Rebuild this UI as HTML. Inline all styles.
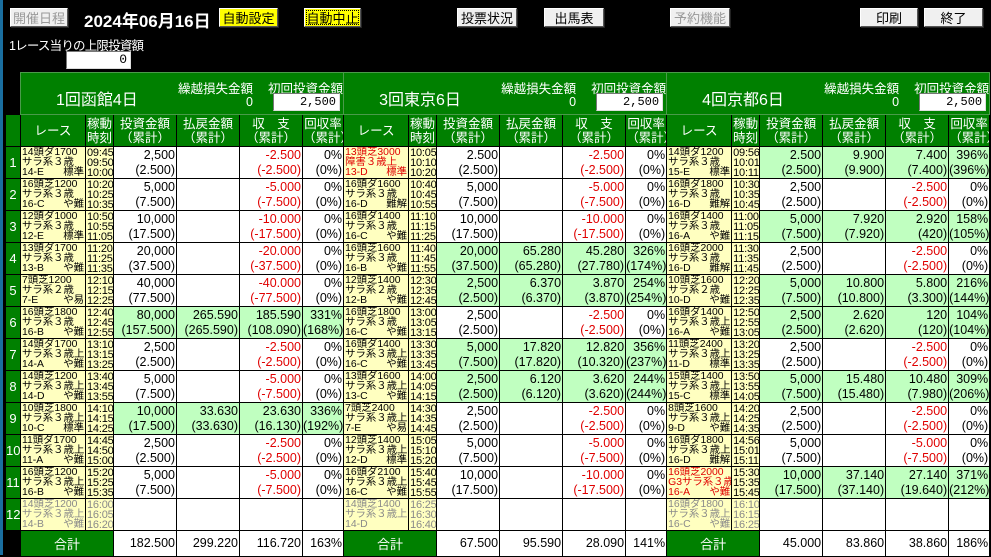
<!DOCTYPE html>
<html><head><meta charset="utf-8">
<style>
body{margin:0;background:#000;width:991px;height:555px;overflow:hidden;position:relative;font-family:"Liberation Sans","Noto Sans CJK JP",sans-serif;}
.btn{position:absolute;top:8px;height:19px;background:#f0f0f0;border:1px solid;border-color:#fff #555 #555 #fff;box-shadow:1px 1px 0 #222;font-size:13px;line-height:19px;text-align:center;color:#000;box-sizing:border-box;}
.dis{color:#999;}
.yel{background:#ffff00;}
#date{position:absolute;left:84px;top:7px;color:#fff;font-size:17px;font-weight:bold;}
#lim{position:absolute;left:9px;top:35px;color:#fff;font-size:12.5px;letter-spacing:-0.8px;}
.inp{position:absolute;background:#fff;border:1px solid;border-color:#777 #ddd #ddd #777;box-sizing:border-box;text-align:right;font-family:"Liberation Mono",monospace;font-size:13px;padding-right:3px;color:#000;}
table{position:absolute;left:5px;top:72px;width:984px;border-collapse:collapse;table-layout:fixed;}
td{border:1px solid #000;padding:0;overflow:hidden;white-space:nowrap;}
.hd{background:#008000;color:#fff;height:41px;position:relative;border-color:#4a9a4a;}
.ch td{background:#008000;color:#fff;font-size:12.5px;line-height:14px;text-align:center;height:31px;}
.rn{background:#008000;color:#fff;text-align:center;font-size:13px;}
.bk{background:#000;border:none;}
.r{position:relative;background:#ffffc0;font-size:10.4px;line-height:10px;letter-spacing:0;padding-left:1px;vertical-align:top;padding-top:1px;}
.r i{position:absolute;right:1px;font-style:normal;}
.t{background:#ffffc0;font-size:11px;line-height:10px;letter-spacing:-0.2px;vertical-align:top;padding-top:1px;padding-left:1px;}
.n{background:#fff;font-size:12.5px;line-height:15px;text-align:right;padding-right:1px;letter-spacing:0;}
.m{color:#e00000;}
.gr{color:#8a8a8a;}
.rd{color:#e00000;}
tr.d{height:32px;}
.tot td{height:25px;}
.sum{background:#008000;color:#fff;text-align:center;font-size:13px;}
.vn{position:absolute;left:35px;top:13px;font-size:16px;}
.l1{position:absolute;left:157px;top:5px;font-size:12.5px;}
.l2{position:absolute;left:247px;top:5px;font-size:12.5px;}
.z{position:absolute;left:225px;top:22px;font-size:12.5px;}
.hd .inp{left:252px;top:20px;width:67px;height:18px;font-size:12px;line-height:16px;}
</style></head><body>
<div style="position:absolute;left:0;top:0;width:3px;height:555px;background:#1a6fa0"></div>
<div class="btn dis" style="left:10px;width:58px;">開催日程</div>
<div id="date">2024年06月16日</div>
<div class="btn yel" style="left:219px;width:59px;">自動設定</div>
<div class="btn yel" style="left:304px;width:57px;outline:1px dotted #000;outline-offset:-3px;">自動中止</div>
<div class="btn" style="left:457px;width:60px;">投票状況</div>
<div class="btn" style="left:544px;width:60px;">出馬表</div>
<div class="btn dis" style="left:670px;width:60px;">予約機能</div>
<div class="btn" style="left:860px;width:58px;">印刷</div>
<div class="btn" style="left:924px;width:59px;">終了</div>
<div id="lim">1レース当りの上限投資額</div>
<div class="inp" style="left:66px;top:51px;width:65px;height:18px;line-height:16px;">0</div>

<table>
<colgroup><col style="width:15px">
<col style="width:65px"><col style="width:28px"><col style="width:63px"><col style="width:63px"><col style="width:63px"><col style="width:41px">
<col style="width:65px"><col style="width:28px"><col style="width:63px"><col style="width:63px"><col style="width:63px"><col style="width:41px">
<col style="width:65px"><col style="width:28px"><col style="width:63px"><col style="width:63px"><col style="width:63px"><col style="width:41px">
</colgroup>
<tr><td class="bk"></td>
<td colspan="6" class="hd"><span class="vn">1回函館4日</span><span class="l1">繰越損失金額</span><span class="l2">初回投資金額</span><span class="z">0</span><div class="inp">2,500</div></td>
<td colspan="6" class="hd"><span class="vn">3回東京6日</span><span class="l1">繰越損失金額</span><span class="l2">初回投資金額</span><span class="z">0</span><div class="inp">2,500</div></td>
<td colspan="6" class="hd"><span class="vn">4回京都6日</span><span class="l1">繰越損失金額</span><span class="l2">初回投資金額</span><span class="z">0</span><div class="inp">2,500</div></td></tr>
<tr class="ch"><td class="bk"></td>
<td>レース</td><td>稼動<br>時刻</td><td>投資金額<br>（累計）</td><td>払戻金額<br>（累計）</td><td>収　支<br>（累計）</td><td>回収率<br>（累計）</td>
<td>レース</td><td>稼動<br>時刻</td><td>投資金額<br>（累計）</td><td>払戻金額<br>（累計）</td><td>収　支<br>（累計）</td><td>回収率<br>（累計）</td>
<td>レース</td><td>稼動<br>時刻</td><td>投資金額<br>（累計）</td><td>払戻金額<br>（累計）</td><td>収　支<br>（累計）</td><td>回収率<br>（累計）</td></tr>

<tr class="d"><td class="rn">1</td>
<td class="r">14頭ダ1700<br>サラ系３歳<br><i>標準</i>14-E</td><td class="t">09:45<br>09:50<br>10:00</td><td class="n">2,500<br>(2.500)</td><td class="n"></td><td class="n m">-2.500<br>(-2.500)</td><td class="n">0%<br>(0%)</td>
<td class="r rd">13頭芝3000<br>障害３歳上<br><i>標準</i>13-D</td><td class="t">10:05<br>10:10<br>10:20</td><td class="n">2.500<br>(2.500)</td><td class="n"></td><td class="n m">-2.500<br>(-2.500)</td><td class="n">0%<br>(0%)</td>
<td class="r">14頭ダ1200<br>サラ系３歳<br><i>標準</i>15-E</td><td class="t">09:56<br>10:01<br>10:11</td><td class="n" style="background:#c0ffc0">2.500<br>(2.500)</td><td class="n" style="background:#c0ffc0">9.900<br>(9.900)</td><td class="n" style="background:#c0ffc0">7.400<br>(7.400)</td><td class="n" style="background:#c0ffc0">396%<br>(396%)</td></tr>

<tr class="d"><td class="rn">2</td>
<td class="r">16頭芝1200<br>サラ系３歳<br><i>や難</i>16-C</td><td class="t">10:20<br>10:25<br>10:35</td><td class="n">5,000<br>(7.500)</td><td class="n"></td><td class="n m">-5.000<br>(-7.500)</td><td class="n">0%<br>(0%)</td>
<td class="r">16頭ダ1600<br>サラ系３歳<br><i>難解</i>16-D</td><td class="t">10:40<br>10:45<br>10:55</td><td class="n">5,000<br>(7.500)</td><td class="n"></td><td class="n m">-5.000<br>(-7.500)</td><td class="n">0%<br>(0%)</td>
<td class="r">16頭ダ1800<br>サラ系３歳<br><i>難解</i>16-D</td><td class="t">10:30<br>10:35<br>10:45</td><td class="n">2,500<br>(2.500)</td><td class="n"></td><td class="n m">-2.500<br>(-2.500)</td><td class="n">0%<br>(0%)</td></tr>

<tr class="d"><td class="rn">3</td>
<td class="r">12頭ダ1000<br>サラ系３歳<br><i>標準</i>12-E</td><td class="t">10:50<br>10:55<br>11:05</td><td class="n">10,000<br>(17.500)</td><td class="n"></td><td class="n m">-10.000<br>(-17.500)</td><td class="n">0%<br>(0%)</td>
<td class="r">16頭ダ1400<br>サラ系３歳<br><i>や難</i>16-C</td><td class="t">11:10<br>11:15<br>11:25</td><td class="n">10,000<br>(17.500)</td><td class="n"></td><td class="n m">-10.000<br>(-17.500)</td><td class="n">0%<br>(0%)</td>
<td class="r">16頭ダ1400<br>サラ系３歳<br><i>や難</i>16-A</td><td class="t">11:00<br>11:05<br>11:15</td><td class="n" style="background:#c0ffc0">5,000<br>(7.500)</td><td class="n" style="background:#c0ffc0">7.920<br>(7.920)</td><td class="n" style="background:#c0ffc0">2.920<br>(420)</td><td class="n" style="background:#c0ffc0">158%<br>(105%)</td></tr>

<tr class="d"><td class="rn">4</td>
<td class="r">13頭ダ1700<br>サラ系３歳<br><i>や難</i>13-B</td><td class="t">11:20<br>11:25<br>11:35</td><td class="n">20,000<br>(37.500)</td><td class="n"></td><td class="n m">-20.000<br>(-37.500)</td><td class="n">0%<br>(0%)</td>
<td class="r">16頭芝1600<br>サラ系３歳<br><i>や難</i>16-B</td><td class="t">11:40<br>11:45<br>11:55</td><td class="n" style="background:#c0ffc0">20,000<br>(37.500)</td><td class="n" style="background:#c0ffc0">65.280<br>(65.280)</td><td class="n" style="background:#c0ffc0">45.280<br>(27.780)</td><td class="n" style="background:#c0ffc0">326%<br>(174%)</td>
<td class="r">16頭芝2000<br>サラ系３歳<br><i>難解</i>16-D</td><td class="t">11:30<br>11:35<br>11:45</td><td class="n">2,500<br>(2.500)</td><td class="n"></td><td class="n m">-2.500<br>(-2.500)</td><td class="n">0%<br>(0%)</td></tr>

<tr class="d"><td class="rn">5</td>
<td class="r">7頭芝1200<br>サラ系２歳<br><i>や易</i>7-E</td><td class="t">12:10<br>12:15<br>12:25</td><td class="n">40,000<br>(77.500)</td><td class="n"></td><td class="n m">-40.000<br>(-77.500)</td><td class="n">0%<br>(0%)</td>
<td class="r">12頭芝1400<br>サラ系２歳<br><i>や難</i>12-B</td><td class="t">12:30<br>12:35<br>12:45</td><td class="n" style="background:#c0ffc0">2,500<br>(2.500)</td><td class="n" style="background:#c0ffc0">6.370<br>(6.370)</td><td class="n" style="background:#c0ffc0">3.870<br>(3.870)</td><td class="n" style="background:#c0ffc0">254%<br>(254%)</td>
<td class="r">10頭芝1600<br>サラ系２歳<br><i>や難</i>10-D</td><td class="t">12:20<br>12:25<br>12:35</td><td class="n" style="background:#c0ffc0">5,000<br>(7.500)</td><td class="n" style="background:#c0ffc0">10.800<br>(10.800)</td><td class="n" style="background:#c0ffc0">5.800<br>(3.300)</td><td class="n" style="background:#c0ffc0">216%<br>(144%)</td></tr>

<tr class="d"><td class="rn">6</td>
<td class="r">16頭芝1800<br>サラ系３歳<br><i>や難</i>16-B</td><td class="t">12:40<br>12:45<br>12:55</td><td class="n" style="background:#c0ffc0">80,000<br>(157.500)</td><td class="n" style="background:#c0ffc0">265.590<br>(265.590)</td><td class="n" style="background:#c0ffc0">185.590<br>(108.090)</td><td class="n" style="background:#c0ffc0">331%<br>(168%)</td>
<td class="r">16頭芝1800<br>サラ系３歳<br><i>や難</i>16-C</td><td class="t">13:00<br>13:05<br>13:15</td><td class="n">2,500<br>(2.500)</td><td class="n"></td><td class="n m">-2.500<br>(-2.500)</td><td class="n">0%<br>(0%)</td>
<td class="r">16頭ダ1400<br>サラ系３歳上<br><i>や難</i>16-A</td><td class="t">12:50<br>12:55<br>13:05</td><td class="n" style="background:#c0ffc0">2,500<br>(2.500)</td><td class="n" style="background:#c0ffc0">2.620<br>(2.620)</td><td class="n" style="background:#c0ffc0">120<br>(120)</td><td class="n" style="background:#c0ffc0">104%<br>(104%)</td></tr>

<tr class="d"><td class="rn">7</td>
<td class="r">14頭ダ1700<br>サラ系３歳上<br><i>や難</i>14-A</td><td class="t">13:10<br>13:15<br>13:25</td><td class="n">2,500<br>(2.500)</td><td class="n"></td><td class="n m">-2.500<br>(-2.500)</td><td class="n">0%<br>(0%)</td>
<td class="r">16頭ダ1400<br>サラ系３歳上<br><i>や難</i>16-C</td><td class="t">13:30<br>13:35<br>13:45</td><td class="n" style="background:#c0ffc0">5,000<br>(7.500)</td><td class="n" style="background:#c0ffc0">17.820<br>(17.820)</td><td class="n" style="background:#c0ffc0">12.820<br>(10.320)</td><td class="n" style="background:#c0ffc0">356%<br>(237%)</td>
<td class="r">11頭芝2400<br>サラ系３歳上<br><i>標準</i>11-D</td><td class="t">13:20<br>13:25<br>13:35</td><td class="n">2,500<br>(2.500)</td><td class="n"></td><td class="n m">-2.500<br>(-2.500)</td><td class="n">0%<br>(0%)</td></tr>

<tr class="d"><td class="rn">8</td>
<td class="r">14頭芝1200<br>サラ系３歳上<br><i>や難</i>14-D</td><td class="t">13:40<br>13:45<br>13:55</td><td class="n">5,000<br>(7.500)</td><td class="n"></td><td class="n m">-5.000<br>(-7.500)</td><td class="n">0%<br>(0%)</td>
<td class="r">13頭ダ1600<br>サラ系３歳上<br><i>や難</i>13-C</td><td class="t">14:00<br>14:05<br>14:15</td><td class="n" style="background:#c0ffc0">2,500<br>(2.500)</td><td class="n" style="background:#c0ffc0">6.120<br>(6.120)</td><td class="n" style="background:#c0ffc0">3.620<br>(3.620)</td><td class="n" style="background:#c0ffc0">244%<br>(244%)</td>
<td class="r">15頭芝1400<br>サラ系３歳上<br><i>標準</i>15-C</td><td class="t">13:50<br>13:55<br>14:05</td><td class="n" style="background:#c0ffc0">5,000<br>(7.500)</td><td class="n" style="background:#c0ffc0">15.480<br>(15.480)</td><td class="n" style="background:#c0ffc0">10.480<br>(7.980)</td><td class="n" style="background:#c0ffc0">309%<br>(206%)</td></tr>

<tr class="d"><td class="rn">9</td>
<td class="r">10頭芝1800<br>サラ系３歳上<br><i>標準</i>10-C</td><td class="t">14:10<br>14:15<br>14:25</td><td class="n" style="background:#c0ffc0">10,000<br>(17.500)</td><td class="n" style="background:#c0ffc0">33.630<br>(33.630)</td><td class="n" style="background:#c0ffc0">23.630<br>(16.130)</td><td class="n" style="background:#c0ffc0">336%<br>(192%)</td>
<td class="r">7頭芝2400<br>サラ系３歳上<br><i>や易</i>7-E</td><td class="t">14:30<br>14:35<br>14:45</td><td class="n">2,500<br>(2.500)</td><td class="n"></td><td class="n m">-2.500<br>(-2.500)</td><td class="n">0%<br>(0%)</td>
<td class="r">8頭芝1600<br>サラ系３歳上<br><i>や難</i>9-D</td><td class="t">14:20<br>14:25<br>14:35</td><td class="n">2,500<br>(2.500)</td><td class="n"></td><td class="n m">-2.500<br>(-2.500)</td><td class="n">0%<br>(0%)</td></tr>

<tr class="d"><td class="rn">10</td>
<td class="r">11頭ダ1700<br>サラ系３歳上<br><i>や難</i>11-A</td><td class="t">14:45<br>14:50<br>15:00</td><td class="n">2,500<br>(2.500)</td><td class="n"></td><td class="n m">-2.500<br>(-2.500)</td><td class="n">0%<br>(0%)</td>
<td class="r">12頭芝1400<br>サラ系３歳上<br><i>標準</i>12-D</td><td class="t">15:05<br>15:10<br>15:20</td><td class="n">5,000<br>(7.500)</td><td class="n"></td><td class="n m">-5.000<br>(-7.500)</td><td class="n">0%<br>(0%)</td>
<td class="r">16頭ダ1800<br>サラ系３歳上<br><i>難解</i>16-D</td><td class="t">14:56<br>15:01<br>15:11</td><td class="n">5,000<br>(7.500)</td><td class="n"></td><td class="n m">-5.000<br>(-7.500)</td><td class="n">0%<br>(0%)</td></tr>

<tr class="d"><td class="rn">11</td>
<td class="r">16頭芝1200<br>サラ系３歳上<br><i>や難</i>16-B</td><td class="t">15:20<br>15:25<br>15:35</td><td class="n">5,000<br>(7.500)</td><td class="n"></td><td class="n m">-5.000<br>(-7.500)</td><td class="n">0%<br>(0%)</td>
<td class="r">16頭ダ2100<br>サラ系３歳上<br><i>や難</i>16-C</td><td class="t">15:40<br>15:45<br>15:55</td><td class="n">10,000<br>(17.500)</td><td class="n"></td><td class="n m">-10.000<br>(-17.500)</td><td class="n">0%<br>(0%)</td>
<td class="r rd">16頭芝2000<br>G3サラ系３歳<br><i>や難</i>16-A</td><td class="t">15:30<br>15:35<br>15:45</td><td class="n" style="background:#c0ffc0">10,000<br>(17.500)</td><td class="n" style="background:#c0ffc0">37.140<br>(37.140)</td><td class="n" style="background:#c0ffc0">27.140<br>(19.640)</td><td class="n" style="background:#c0ffc0">371%<br>(212%)</td></tr>

<tr class="d"><td class="rn">12</td>
<td class="r gr">14頭芝1200<br>サラ系３歳上<br><i>や難</i>14-B</td><td class="t gr">16:00<br>16:05<br>16:20</td><td class="n"></td><td class="n"></td><td class="n"></td><td class="n"></td>
<td class="r gr">14頭芝1400<br>サラ系３歳上<br>14-D</td><td class="t gr">16:25<br>16:30<br>16:40</td><td class="n"></td><td class="n"></td><td class="n"></td><td class="n"></td>
<td class="r gr">16頭ダ1800<br>サラ系３歳上<br><i>や難</i>16-C</td><td class="t gr">16:10<br>16:15<br>16:25</td><td class="n"></td><td class="n"></td><td class="n"></td><td class="n"></td></tr>

<tr class="tot"><td class="bk"></td>
<td colspan="2" class="sum">合計</td><td class="n">182.500</td><td class="n">299.220</td><td class="n">116.720</td><td class="n">163%</td>
<td colspan="2" class="sum">合計</td><td class="n">67.500</td><td class="n">95.590</td><td class="n">28.090</td><td class="n">141%</td>
<td colspan="2" class="sum">合計</td><td class="n">45.000</td><td class="n">83.860</td><td class="n">38.860</td><td class="n">186%</td></tr>
</table>
</body></html>
